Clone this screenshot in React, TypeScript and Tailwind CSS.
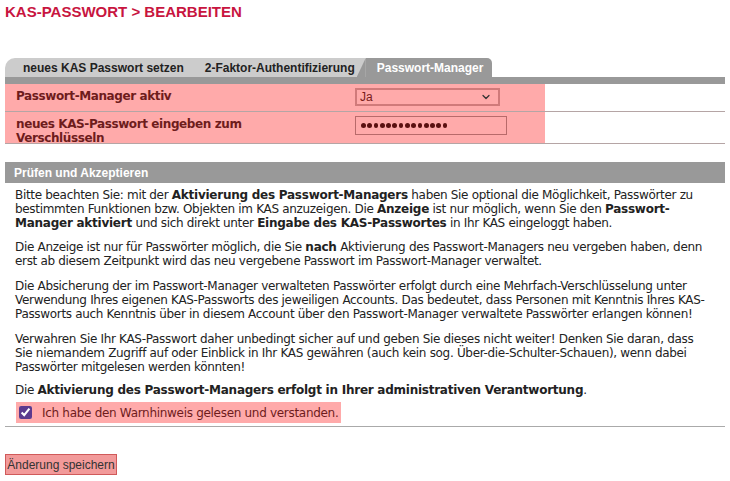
import { LuChevronDown } from "react-icons/lu";

const verdana = "[font-family:Verdana,'DejaVu_Sans',sans-serif]";

const Tabs = () => (
  <div className="flex h-[19px] items-end [font-family:Arial,'Liberation_Sans',sans-serif] text-[12px] font-bold">
    <div className="flex h-[19px] items-center bg-[#cccccc] rounded-tl-[10px]">
      <span className="pl-[18px] pr-[21px] text-[#222]">neues KAS Passwort setzen</span>
      <span className="pr-[2px] text-[#222]">2-Faktor-Authentifizierung</span>
    </div>
    <div className="flex h-[19px] bg-[#cccccc]">
      <div className="h-[19px] w-[9px] bg-[#999999] [clip-path:polygon(100%_0,100%_100%,0_100%)]" />
    </div>
    <div className="flex h-[19px] items-center bg-[#999999] rounded-tr-[5px] pl-[11px] pr-[9px] text-white">
      Passwort-Manager
    </div>
  </div>
);

const Row = ({ label, children, h }: { label: React.ReactNode; children: React.ReactNode; h: string }) => (
  <div className={`flex border-b border-[#b5a5a5] ${h}`}>
    <div className="flex w-[540px] bg-[#ffaaaa]">
      <div className={`w-[345px] pl-[11px] pt-[5px] text-[12px] font-bold leading-[14px] tracking-[-0.4px] text-[#6e1c1c] ${verdana}`}>
        {label}
      </div>
      <div className="pl-[5px] pt-[4px]">{children}</div>
    </div>
  </div>
);

const dots = Array.from({ length: 14 });

export default function App() {
  return (
    <div className="h-[481px] w-[730px] overflow-hidden bg-white">
      <h1 className="pl-[5px] pt-[2px] text-[15px] font-bold leading-[20px] text-[#c8153f] [font-family:Arial,'Liberation_Sans',sans-serif]">
        KAS-PASSWORT &gt; BEARBEITEN
      </h1>

      <div className="mx-[5px] mt-[36px]">
        <Tabs />
        <div className="h-[7px] bg-[#999999]" />

        <Row label="Passwort-Manager aktiv" h="h-[28px]">
          <div className="flex h-[18px] w-[145px] items-center justify-between border-2 border-[#d07a7a] bg-[#ffaaaa] pl-[3px] pr-[6px] text-[12px] text-[#7a1c1c] [font-family:Arial,'Liberation_Sans',sans-serif]">
            <span>Ja</span>
            <LuChevronDown size={12} strokeWidth={2.5} className="text-[#333]" />
          </div>
        </Row>
        <Row
          label={
            <>
              neues KAS-Passwort eingeben zum
              <br />
              Verschlüsseln
            </>
          }
          h="h-[32px]"
        >
          <div className="flex h-[19px] w-[152px] items-center gap-[1.6px] border border-[#b86a6a] bg-[#ffaaaa] pl-[5px]">
            {dots.map((_, i) => (
              <span key={i} className="h-[4.7px] w-[4.7px] rounded-full bg-[#5a1010]" />
            ))}
          </div>
        </Row>

        <div className="mt-[18px] flex h-[21px] items-center bg-[#999999] pl-[9px] text-[12px] font-bold text-white [font-family:Arial,'Liberation_Sans',sans-serif]">
          Prüfen und Akzeptieren
        </div>

        <div className={`pl-[10px] pt-[5px] text-[12px] leading-[14px] tracking-[-0.32px] text-[#222] ${verdana} whitespace-nowrap [&_b]:tracking-[-0.25px]`}>
          <p className="mb-[10px]">
            Bitte beachten Sie: mit der <b>Aktivierung des Passwort-Managers</b> haben Sie optional die Möglichkeit, Passwörter zu
            <br />
            bestimmten Funktionen bzw. Objekten im KAS anzuzeigen. Die <b>Anzeige</b> ist nur möglich, wenn Sie den <b>Passwort-</b>
            <br />
            <b>Manager aktiviert</b> und sich direkt unter <b>Eingabe des KAS-Passwortes</b> in Ihr KAS eingeloggt haben.
          </p>
          <p className="mb-[11px]">
            Die Anzeige ist nur für Passwörter möglich, die Sie <b>nach</b> Aktivierung des Passwort-Managers neu vergeben haben, denn
            <br />
            erst ab diesem Zeitpunkt wird das neu vergebene Passwort im Passwort-Manager verwaltet.
          </p>
          <p className="mb-[11px]">
            Die Absicherung der im Passwort-Manager verwalteten Passwörter erfolgt durch eine Mehrfach-Verschlüsselung unter
            <br />
            Verwendung Ihres eigenen KAS-Passworts des jeweiligen Accounts. Das bedeutet, dass Personen mit Kenntnis Ihres KAS-
            <br />
            Passworts auch Kenntnis über in diesem Account über den Passwort-Manager verwaltete Passwörter erlangen können!
          </p>
          <p className="mb-[9px]">
            Verwahren Sie Ihr KAS-Passwort daher unbedingt sicher auf und geben Sie dieses nicht weiter! Denken Sie daran, dass
            <br />
            Sie niemandem Zugriff auf oder Einblick in Ihr KAS gewähren (auch kein sog. Über-die-Schulter-Schauen), wenn dabei
            <br />
            Passwörter mitgelesen werden könnten!
          </p>
          <p>
            Die <b>Aktivierung des Passwort-Managers erfolgt in Ihrer administrativen Verantwortung</b>.
          </p>
        </div>

        <div className="mt-[5px] border-b border-[#aaaaaa] pb-[3px] pl-[11px]">
          <label className={`flex h-[21px] w-[325px] items-center gap-[10px] whitespace-nowrap bg-[#ffaaaa] pl-[3px] text-[12px] tracking-[-0.3px] text-[#6e1c1c] ${verdana}`}>
            <input type="checkbox" defaultChecked className="m-0 h-[13px] w-[13px] accent-[#5b3a8e]" />
            Ich habe den Warnhinweis gelesen und verstanden.
          </label>
        </div>

        <button className="mt-[27px] h-[21px] w-[112px] border border-[#d05a5a] bg-[#f29a9a] text-[12px] text-[#333] [font-family:Arial,'Liberation_Sans',sans-serif]">
          Änderung speichern
        </button>
      </div>
    </div>
  );
}
